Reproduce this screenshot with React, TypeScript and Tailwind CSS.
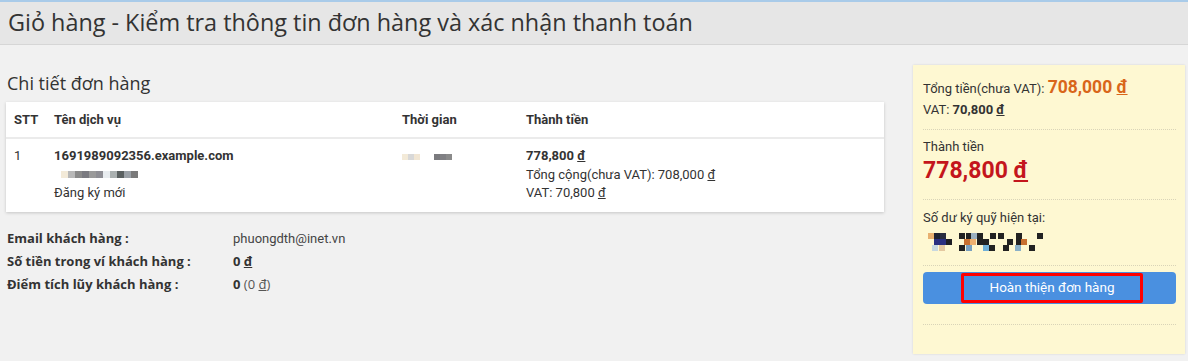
import React from "react";

const roboto = { fontFamily: "Roboto, 'Liberation Sans', sans-serif" };

type Cell = [number, number, string];

// pixelated redaction blocks, drawn as svg
const Pixels = ({ cells, w, h, size = 6 }: { cells: Cell[]; w: number; h: number; size?: number }) => (
  <svg width={w} height={h} viewBox={`0 0 ${w} ${h}`}>
    {cells.map(([x, y, c], i) => (
      <rect key={i} x={x} y={y} width={size} height={size} fill={c} />
    ))}
  </svg>
);

const balanceCells: Cell[] = [
  [0, 0, "#e8b070"], [6, 0, "#1e2232"], [12, 0, "#2a2d40"], [31, 0, "#222"], [38, 0, "#222"], [43, 0, "#9bb0c0"],
  [49, 0, "#222"], [62, 0, "#222"], [70, 0, "#222"], [88, 0, "#222"], [109, 0, "#222"],
  [6, 6, "#2a2f80"], [12, 6, "#2a2f80"], [18, 6, "#1e1e24"], [36, 6, "#c87030"], [42, 6, "#eeb070"], [49, 6, "#222"],
  [55, 6, "#222"], [79, 6, "#222"], [88, 6, "#222"], [93, 6, "#c87030"],
  [4, 12, "#c8d8e0"], [11, 12, "#e4c8a0"], [31, 12, "#222"], [38, 12, "#7aa0c0"], [55, 12, "#70b0d8"], [61, 12, "#222"],
  [75, 12, "#222"], [87, 12, "#8ab0c8"], [101, 12, "#222"],
];

const nameCells: Cell[] = [
  [0, 0, "#f3ead8"], [7, 0, "#b8b8b8"], [14, 0, "#8a8a8a"], [21, 0, "#7a7a80"], [28, 0, "#9a9a9a"], [35, 0, "#8e8e94"],
  [42, 0, "#e8ecef"], [49, 0, "#aab0b0"], [56, 0, "#5a6060"], [63, 0, "#9aa0a6"], [70, 0, "#7a7a7a"],
];

const timeCells: Cell[] = [
  [0, 0, "#f3ead8"], [6, 0, "#d8d8d8"], [12, 0, "#f1e6d4"], [32, 0, "#7a7a7e"], [38, 0, "#808084"], [44, 0, "#8a8a8a"],
];

const InfoRow = ({ label, children }: { label: string; children: React.ReactNode }) => (
  <div className="flex h-[23px] items-center">
    <div className="w-[226px] font-bold">{label}</div>
    <div>{children}</div>
  </div>
);

export default function App() {
  return (
    <div className="min-h-[361px] bg-[#f1f1f1] text-[#333]" style={{ fontFamily: "'Open Sans', 'Liberation Sans', sans-serif" }}>
      <div className="h-[45px] border-t-2 border-[#a9cbe9] border-b border-b-[#d6d6d6] bg-[#e6e6e6] px-2 flex items-center">
        <h1 className="text-[23.4px] leading-none -mt-[1px]">Giỏ hàng - Kiểm tra thông tin đơn hàng và xác nhận thanh toán</h1>
      </div>

      <div className="flex pl-[6px] pr-[3px] pt-[20px] gap-[29px]">
        <div className="flex-1">
          <h2 className="text-[18px] leading-[24px] mt-[6px] mb-[7px] pl-[1px]">Chi tiết đơn hàng</h2>

          <div className="bg-white shadow-[0_1px_3px_rgba(0,0,0,0.18)] text-[13px]" style={roboto}>
            <div className="flex h-[37px] items-center font-bold border-b-2 border-[#ebebeb]">
              <div className="w-[48px] pl-[8px]">STT</div>
              <div className="w-[348px]">Tên dịch vụ</div>
              <div className="w-[124px]">Thời gian</div>
              <div>Thành tiền</div>
            </div>
            <div className="flex pt-[8px] pb-[9px] leading-[18.5px]">
              <div className="w-[48px] pl-[8px]">1</div>
              <div className="w-[348px]">
                <div className="font-bold">1691989092356.example.com</div>
                <div className="h-[18.5px] flex items-center pl-[7px]">
                  <Pixels cells={nameCells} w={77} h={7} size={7} />
                </div>
                <div>Đăng ký mới</div>
              </div>
              <div className="w-[124px] pt-[7px]">
                <Pixels cells={timeCells} w={50} h={6} />
              </div>
              <div>
                <div className="font-bold">778,800 <span className="underline">đ</span></div>
                <div>Tổng cộng(chưa VAT): 708,000 <span className="underline">đ</span></div>
                <div>VAT: 70,800 <span className="underline">đ</span></div>
              </div>
            </div>
          </div>

          <div className="mt-[16px] text-[13px] pl-[1px]">
            <InfoRow label="Email khách hàng :">
              <span style={roboto} className="text-[#444]">phuongdth@inet.vn</span>
            </InfoRow>
            <InfoRow label="Số tiền trong ví khách hàng :">
              <span className="font-bold">0 <span className="underline">đ</span></span>
            </InfoRow>
            <InfoRow label="Điểm tích lũy khách hàng :">
              <span><b>0</b> <span className="text-[#555]">(0 <span className="underline">đ</span>)</span></span>
            </InfoRow>
          </div>
        </div>

        <div className="w-[272px] h-[289px] bg-[#fef8d2] shadow-[0_0_2px_rgba(0,0,0,0.12)] pl-[10px] pr-[9px] text-[13px]" style={roboto}>
          <div className="pt-[12px] pb-[8.5px] leading-[21px] border-b border-dotted border-[#d9d4b8]">
            <div>
              Tổng tiền(chưa VAT):{" "}
              <span className="text-[17.5px] font-bold text-[#d9661a]">708,000 <span className="underline">đ</span></span>
            </div>
            <div>
              VAT: <b>70,800 <span className="underline">đ</span></b>
            </div>
          </div>
          <div className="pt-[7px] pb-[14px] border-b border-dotted border-[#d9d4b8]">
            <div className="leading-[20px]">Thành tiền</div>
            <div className="text-[23px] leading-[28px] font-bold text-[#c4161c]">
              778,800 <span className="underline">đ</span>
            </div>
          </div>
          <div className="pt-[8px] pb-[13px] border-b border-dotted border-[#d9d4b8]">
            <div className="leading-[20px]">Số dư ký quỹ hiện tại:</div>
            <div className="h-[24px] pt-[5px] pl-[5px]">
              <Pixels cells={balanceCells} w={120} h={18} />
            </div>
          </div>
          <div className="pt-[6px] pb-[20px] border-b border-dotted border-[#d9d4b8]">
            <button className="w-full h-[32px] rounded-[4px] bg-[#4a90e0] text-white text-[13.5px] flex items-center justify-center">
              <span className="h-[30px] flex items-center border-[3px] border-[#ff0000] rounded-[2px] px-[26px] ml-[5px]">
                Hoàn thiện đơn hàng
              </span>
            </button>
          </div>
        </div>
      </div>
    </div>
  );
}
